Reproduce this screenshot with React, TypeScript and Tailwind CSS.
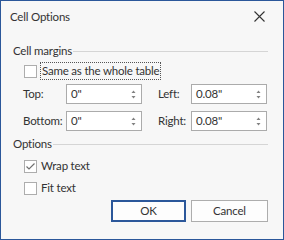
import React from "react";

const Spin = () => (
  <svg width="7" height="12" viewBox="0 0 7 12" className="shrink-0">
    <path d="M1.5 5 L3.5 2.5 L5.5 5 Z" fill="#808080" />
    <path d="M1.5 8 L3.5 10.5 L5.5 8 Z" fill="#808080" />
  </svg>
);

const NumInput = ({ value }: { value: string }) => (
  <div className="w-[76px] h-[20px] bg-white border border-[#ababab] flex items-center pl-[4px] pr-[4px] justify-between">
    <span className="leading-none">{value}</span>
    <Spin />
  </div>
);

const Check = ({ checked }: { checked?: boolean }) => (
  <div className="w-[13px] h-[13px] bg-white border border-[#adadad] flex items-center justify-center shrink-0">
    {checked && (
      <svg width="11" height="11" viewBox="0 0 11 11">
        <path d="M1.5 5.5 L4 8 L9.5 2.5" stroke="#707070" strokeWidth="1.2" fill="none" />
      </svg>
    )}
  </div>
);

const Header = ({ title }: { title: string }) => (
  <div className="flex items-center h-[16px] pl-[12px] pr-[15px]">
    <span>{title}</span>
    <div className="flex-1 h-px bg-[#d5d5d5] ml-[1px]" />
  </div>
);

export default function App() {
  return (
    <div
      className="w-[284px] h-[240px] bg-[#f7f7f7] border border-[#2b579a] flex flex-col text-[11.5px] tracking-[-0.2px] text-[#333333]"
      style={{ fontFamily: 'Lato, "Open Sans", sans-serif' }}
    >
      <div className="h-[31px] flex items-center justify-between pl-[9px] pr-[18px]">
        <span>Cell Options</span>
        <svg width="11" height="11" viewBox="0 0 11 11">
          <path d="M0.5 0.5 L10.5 10.5 M10.5 0.5 L0.5 10.5" stroke="#333" strokeWidth="1.1" />
        </svg>
      </div>
      <div className="mt-[11px]">
        <Header title="Cell margins" />
      </div>
      <div className="flex items-center h-[18px] mt-[3px] pl-[23px]">
        <Check />
        <span className="ml-[3px] px-[1px] border border-dotted border-[#555] leading-[16px]">Same as the whole table</span>
      </div>
      <div className="flex flex-col gap-[7px] mt-[4px] pl-[22px]">
        <div className="flex items-center">
          <span className="w-[43px]">Top:</span>
          <NumInput value={'0"'} />
          <span className="w-[33px] ml-[16px]">Left:</span>
          <NumInput value={'0.08"'} />
        </div>
        <div className="flex items-center">
          <span className="w-[43px]">Bottom:</span>
          <NumInput value={'0"'} />
          <span className="w-[33px] ml-[16px]">Right:</span>
          <NumInput value={'0.08"'} />
        </div>
      </div>
      <div className="mt-[5px]">
        <Header title="Options" />
      </div>
      <div className="flex items-center h-[14px] mt-[7px] pl-[23px] gap-[4px]">
        <Check checked />
        <span>Wrap text</span>
      </div>
      <div className="flex items-center h-[14px] mt-[8px] pl-[23px] gap-[4px]">
        <Check />
        <span>Fit text</span>
      </div>
      <div className="flex justify-end gap-[5px] pr-[15px] mt-[5px]">
        <button className="w-[75px] h-[22px] bg-[#fdfdfd] border-2 border-[#2b579a] flex items-center justify-center">OK</button>
        <button className="w-[77px] h-[22px] bg-[#fdfdfd] border border-[#adadad] flex items-center justify-center">Cancel</button>
      </div>
    </div>
  );
}
